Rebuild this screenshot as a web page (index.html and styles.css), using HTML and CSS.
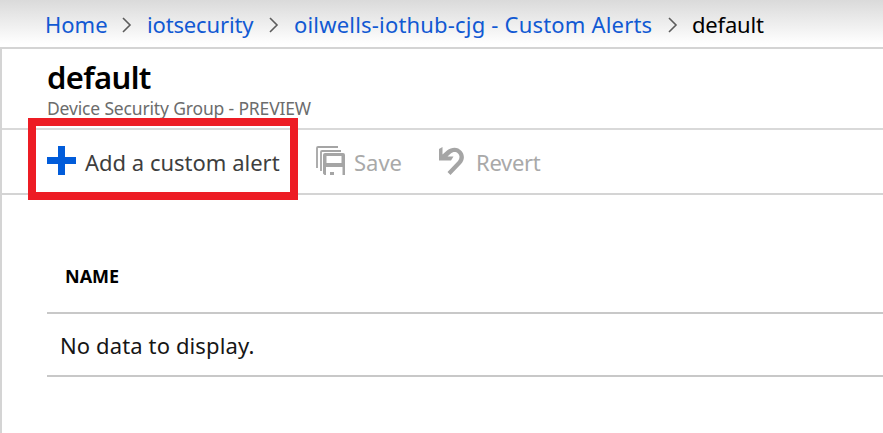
FILE: index.html
```html
<!DOCTYPE html>
<html lang="en">
<head>
<meta charset="utf-8">
<title>default - Custom Alerts</title>
<link rel="stylesheet" href="styles.css">
</head>
<body>
<nav class="breadcrumb">
  <a class="home">Home</a>
  <svg class="chevron" viewBox="0 0 10 16"><path d="M1 1l7 7-7 7"/></svg>
  <a class="hub">iotsecurity</a>
  <svg class="chevron" viewBox="0 0 10 16"><path d="M1 1l7 7-7 7"/></svg>
  <a class="alerts">oilwells-iothub-cjg - Custom Alerts</a>
  <svg class="chevron" viewBox="0 0 10 16"><path d="M1 1l7 7-7 7"/></svg>
  <span class="current">default</span>
</nav>
<main class="blade">
  <header class="heading">
    <h1><span>default</span></h1>
    <p><span>Device Security Group - PREVIEW</span></p>
  </header>
  <div class="toolbar">
    <button class="command add">
      <svg class="plus" viewBox="0 0 29 29"><path d="M11 0h7v11h11v7H18v11h-7V18H0v-7h11z"/></svg>
      <span>Add a custom alert</span>
    </button>
    <button class="command save" disabled>
      <svg class="disk" viewBox="0 0 29 29">
        <path class="sheet" d="M1 22V2q0-1 1-1h20M5 25V6q0-1 1-1h19"/>
        <path fill-rule="evenodd" d="M9 7h18q2 0 2 2v20h-2.500v-8H10v8H8.500L7 27.500V9q0-2 2-2zM10.500 10v7h15v-7zM14 26h4v3h-4z"/>
      </svg>
      <span>Save</span>
    </button>
    <button class="command revert" disabled>
      <svg class="undo" viewBox="0 0 26 28"><path d="M0 2L3.500 0v7.500L8 3.500C13-.5 19-.3 22.500 4c3.500 4.300 3 9.500-.5 13L11.500 28l-3-3L19 14c2-2.500 2-5.500 0-7.500s-5-2-7.500.2L8.500 9.500h6L12 13.500H0z"/></svg>
      <span>Revert</span>
    </button>
    <div class="highlight"></div>
  </div>
  <section class="table">
    <div class="table-head"><span>NAME</span></div>
    <div class="table-row"><span>No data to display.</span></div>
  </section>
</main>
</body>
</html>
```
FILE: styles.css
```css
* { box-sizing: border-box; }
body {
  margin: 0;
  height: 433px;
  overflow: hidden;
  display: flex;
  flex-direction: column;
  background: #fff;
  color: #000;
  font: 22px/30px "Noto Sans", "Open Sans", sans-serif;
}
.breadcrumb {
  height: 47px;
  flex: none;
  display: flex;
  align-items: center;
  padding: 1px 0 0 45px;
  white-space: nowrap;
  background: linear-gradient(#dadada, #fff 44px);
}
.breadcrumb a { color: #1159d3; }
.breadcrumb a, .current { flex: none; }
.home { width: 77px; }
.hub { width: 122px; letter-spacing: -.15px; }
.alerts { width: 374px; letter-spacing: .19px; }
.current { margin-left: -1px; letter-spacing: -.2px; }
.chevron {
  width: 10px;
  height: 16px;
  flex: none;
  margin: 1px 15px 0 0;
  fill: none;
  stroke: #5c5c5c;
  stroke-width: 1.6;
}
.blade {
  flex: 1;
  border: solid #d4d4d4;
  border-width: 2px 0 0 2px;
}
.heading {
  height: 81px;
  padding: 8px 0 0 45px;
  border-bottom: 2px solid #d9d9d9;
}
h1 { margin: 0; font-size: 31px; line-height: 40px; font-weight: 600; letter-spacing: -.65px; }
p { margin: 0; font-size: 17.500px; line-height: 22px; color: #6c6c6c; letter-spacing: -.16px; }
.toolbar {
  position: relative;
  height: 65px;
  display: flex;
  align-items: center;
  padding: 0 0 2px 45px;
  border-bottom: 2px solid #d4d4d4;
}
.command {
  display: flex;
  align-items: center;
  flex: none;
  padding: 0;
  border: 0;
  background: none;
  font: inherit;
  color: #3e3e3e;
  white-space: nowrap;
}
.command:disabled { color: #a9a9a9; }
.command span { padding-top: 2px; }
.add { width: 269px; }
.save { width: 123px; }
.revert { letter-spacing: -.3px; }
.plus { width: 29px; height: 29px; margin-right: 9px; fill: #015cda; }
.disk { width: 29px; height: 29px; margin-right: 9px; fill: #a5a5a5; }
.sheet { fill: none; stroke: #a5a5a5; stroke-width: 1.8; }
.undo { width: 26px; height: 28px; margin-right: 11px; fill: #a5a5a5; }
.highlight {
  position: absolute;
  left: 26px;
  top: -12px;
  width: 270px;
  height: 82px;
  border: 8px solid #ed1c24;
}
.table { margin: 48px 0 0 45px; }
.table-head {
  height: 71px;
  padding: 18px 0 0 18px;
  border-bottom: 2px solid #c8c8c8;
  font-size: 18px;
  font-weight: 700;
}
.table-row {
  height: 63px;
  padding: 16px 0 0 13px;
  border-bottom: 2px solid #c8c8c8;
  color: #161616;
  letter-spacing: .12px;
}
```
